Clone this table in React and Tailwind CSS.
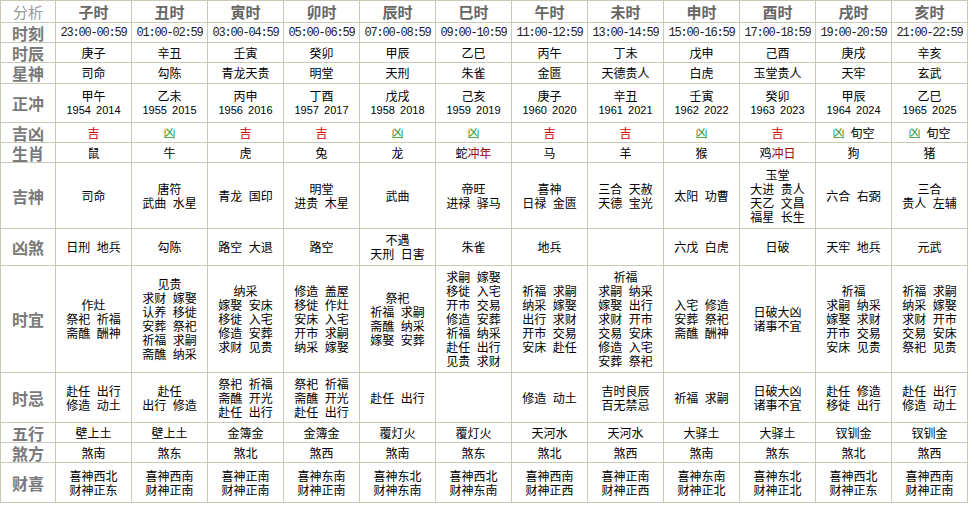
import React from "react";

const HOURS = ["子时","丑时","寅时","卯时","辰时","巳时","午时","未时","申时","酉时","戌时","亥时"];
const TIMES = ["23:00-00:59","01:00-02:59","03:00-04:59","05:00-06:59","07:00-08:59","09:00-10:59","11:00-12:59","13:00-14:59","15:00-16:59","17:00-18:59","19:00-20:59","21:00-22:59"];
const GZ = ["庚子","辛丑","壬寅","癸卯","甲辰","乙巳","丙午","丁未","戊申","己酉","庚戌","辛亥"];
const XS = ["司命","勾陈","青龙天贵","明堂","天刑","朱雀","金匮","天德贵人","白虎","玉堂贵人","天牢","玄武"];
const ZC = [["甲午","1954 2014"],["乙未","1955 2015"],["丙申","1956 2016"],["丁酉","1957 2017"],["戊戌","1958 2018"],["己亥","1959 2019"],["庚子","1960 2020"],["辛丑","1961 2021"],["壬寅","1962 2022"],["癸卯","1963 2023"],["甲辰","1964 2024"],["乙巳","1965 2025"]];
const JX = [["吉"],["凶"],["吉"],["吉"],["凶"],["凶"],["吉"],["吉"],["凶"],["吉"],["凶","旬空"],["凶","旬空"]];
const SX = [["鼠"],["牛"],["虎"],["兔"],["龙"],["蛇","冲年"],["马"],["羊"],["猴"],["鸡","冲日"],["狗"],["猪"]];
const JS = [
  ["司命"],["唐符","武曲 水星"],["青龙 国印"],["明堂","进贵 木星"],["武曲"],["帝旺","进禄 驿马"],["喜神","日禄 金匮"],["三合 天赦","天德 宝光"],["太阳 功曹"],["玉堂","大进 贵人","天乙 文昌","福星 长生"],["六合 右弼"],["三合","贵人 左辅"]
];
const XSHA = [["日刑 地兵"],["勾陈"],["路空 大退"],["路空"],["不遇","天刑 日害"],["朱雀"],["地兵"],[],["六戊 白虎"],["日破"],["天牢 地兵"],["元武"]];
const SY = [
  ["作灶","祭祀 祈福","斋醮 酬神"],
  ["见贵","求财 嫁娶","认养 移徙","安葬 祭祀","祈福 求嗣","斋醮 纳采"],
  ["纳采","嫁娶 安床","移徙 入宅","修造 安葬","求财 见贵"],
  ["修造 盖屋","移徙 作灶","安床 入宅","开市 求嗣","纳采 嫁娶"],
  ["祭祀","祈福 求嗣","斋醮 纳采","嫁娶 安葬"],
  ["求嗣 嫁娶","移徙 入宅","开市 交易","修造 安葬","祈福 纳采","赴任 出行","见贵 求财"],
  ["祈福 求嗣","纳采 嫁娶","出行 求财","开市 交易","安床 赴任"],
  ["祈福","求嗣 纳采","嫁娶 出行","求财 开市","交易 安床","修造 入宅","安葬 祭祀"],
  ["入宅 修造","安葬 祭祀","斋醮 酬神"],
  ["日破大凶","诸事不宜"],
  ["祈福","求嗣 纳采","嫁娶 求财","开市 交易","安床 见贵"],
  ["祈福 求嗣","纳采 嫁娶","求财 开市","交易 安床","祭祀 见贵"]
];
const SJ = [
  ["赴任 出行","修造 动土"],["赴任","出行 修造"],["祭祀 祈福","斋醮 开光","赴任 出行"],["祭祀 祈福","斋醮 开光","赴任 出行"],["赴任 出行"],[],["修造 动土"],["吉时良辰","百无禁忌"],["祈福 求嗣"],["日破大凶","诸事不宜"],["赴任 修造","移徙 出行"],["赴任 出行","修造 动土"]
];
const WX = ["壁上土","壁上土","金簿金","金簿金","覆灯火","覆灯火","天河水","天河水","大驿土","大驿土","钗钏金","钗钏金"];
const SF = ["煞南","煞东","煞北","煞西","煞南","煞东","煞北","煞西","煞南","煞东","煞北","煞西"];
const CX = [
  ["喜神西北","财神正东"],["喜神西南","财神正南"],["喜神正南","财神正南"],["喜神东南","财神正南"],["喜神东北","财神东南"],["喜神西北","财神东南"],["喜神西南","财神正西"],["喜神正南","财神正西"],["喜神东南","财神正北"],["喜神东北","财神正北"],["喜神西北","财神正东"],["喜神西南","财神正南"]
];

const cjk = "font-['Noto_Sans_CJK_SC',sans-serif]";
const td = "border border-[#c9c9b8] text-center align-middle p-0";
const lbl = `${td} text-[16px] font-bold text-[#7a7a7a] leading-none`;

function Lines({ lines }) {
  return (
    <div className="text-[12px] leading-[14px] text-black [word-spacing:4px]">
      {lines.map((l, i) => (
        <div key={i}>{l}</div>
      ))}
    </div>
  );
}

function Row({ label, h, children }) {
  return (
    <tr className={h}>
      <td className={lbl}>{label}</td>
      {children}
    </tr>
  );
}

export default function App() {
  return (
    <div className={`bg-white w-[971px] h-[505px] ${cjk}`}>
      <table className="table-fixed border-collapse w-[968px]">
        <colgroup>
          <col className="w-[55px]" />
          {HOURS.map((h) => (
            <col key={h} className="w-[76px]" />
          ))}
        </colgroup>
        <tbody>
          <tr className="h-[22px]">
            <td className={`${td} text-[15px] text-[#999] leading-none`}>分析</td>
            {HOURS.map((h) => (
              <td key={h} className={`${td} text-[15px] font-bold text-[#666] leading-none`}>{h}</td>
            ))}
          </tr>
          <Row label="时刻" h="h-[20px]">
            {TIMES.map((t) => (
              <td key={t} className={`${td} font-['Liberation_Mono',monospace] text-[12px] tracking-[-1.2px] text-[#222] leading-none`}>{t}</td>
            ))}
          </Row>
          <Row label="时辰" h="h-[20px]">
            {GZ.map((t, i) => (
              <td key={i} className={td}><Lines lines={[t]} /></td>
            ))}
          </Row>
          <Row label="星神" h="h-[21px]">
            {XS.map((t, i) => (
              <td key={i} className={td}><Lines lines={[t]} /></td>
            ))}
          </Row>
          <Row label="正冲" h="h-[39px]">
            {ZC.map((t, i) => (
              <td key={i} className={td}>
                <div className="text-[12px] leading-[14px] text-black">{t[0]}</div>
                <div className="font-['Liberation_Sans',sans-serif] text-[11px] leading-[14px] text-black [word-spacing:2px]">{t[1]}</div>
              </td>
            ))}
          </Row>
          <Row label="吉凶" h="h-[20px]">
            {JX.map((t, i) => (
              <td key={i} className={`${td} text-[12px]`}>
                <span className={t[0] === "吉" ? "text-[#d00000]" : "text-[#2e9a2e]"}>{t[0]}</span>
                {t[1] && <span className="text-black ml-[6px]">{t[1]}</span>}
              </td>
            ))}
          </Row>
          <Row label="生肖" h="h-[20px]">
            {SX.map((t, i) => (
              <td key={i} className={`${td} text-[12px] text-black`}>
                {t[0]}
                {t[1] && <span className="text-[#9a0000]">{t[1]}</span>}
              </td>
            ))}
          </Row>
          <Row label="吉神" h="h-[66px]">
            {JS.map((t, i) => (
              <td key={i} className={td}><Lines lines={t} /></td>
            ))}
          </Row>
          <Row label="凶煞" h="h-[37px]">
            {XSHA.map((t, i) => (
              <td key={i} className={td}><Lines lines={t} /></td>
            ))}
          </Row>
          <Row label="时宜" h="h-[107px]">
            {SY.map((t, i) => (
              <td key={i} className={td}><Lines lines={t} /></td>
            ))}
          </Row>
          <Row label="时忌" h="h-[50px]">
            {SJ.map((t, i) => (
              <td key={i} className={td}><Lines lines={t} /></td>
            ))}
          </Row>
          <Row label="五行" h="h-[20px]">
            {WX.map((t, i) => (
              <td key={i} className={td}><Lines lines={[t]} /></td>
            ))}
          </Row>
          <Row label="煞方" h="h-[20px]">
            {SF.map((t, i) => (
              <td key={i} className={td}><Lines lines={[t]} /></td>
            ))}
          </Row>
          <Row label="财喜" h="h-[40px]">
            {CX.map((t, i) => (
              <td key={i} className={td}><Lines lines={t} /></td>
            ))}
          </Row>
        </tbody>
      </table>
    </div>
  );
}
